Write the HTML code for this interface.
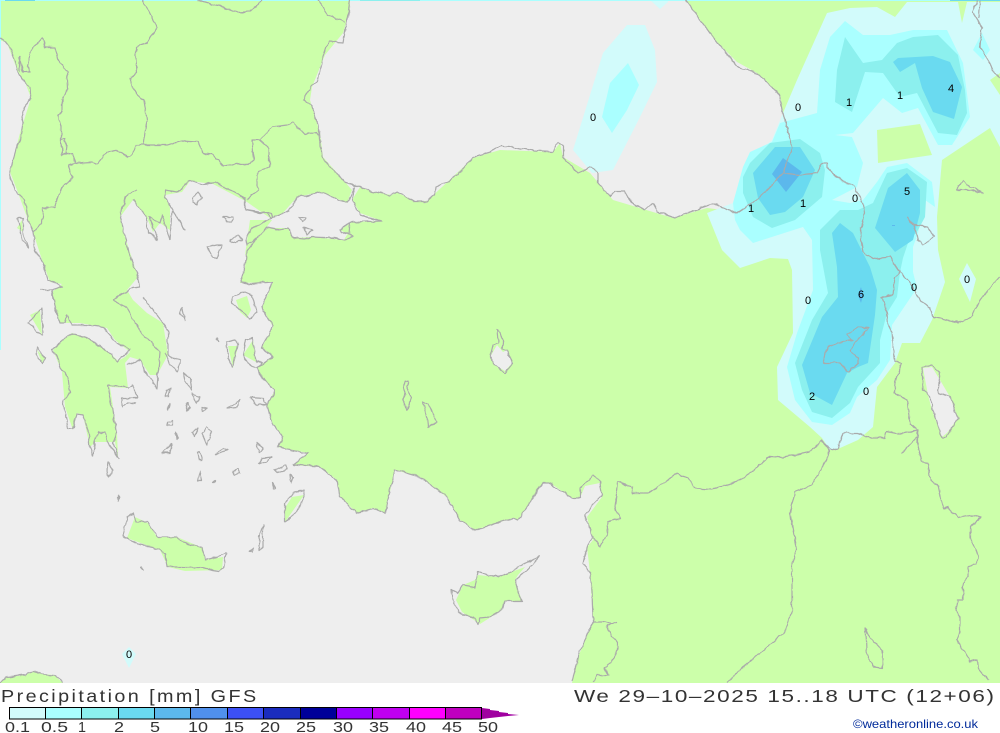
<!DOCTYPE html>
<html lang="en"><head><meta charset="utf-8"><title>Precipitation [mm] GFS</title>
<style>
html,body{margin:0;padding:0;background:#fff;width:1000px;height:733px;overflow:hidden}
svg{display:block;position:absolute;left:0;top:0}
text{font-family:"Liberation Sans",sans-serif}
</style></head><body>
<svg width="1000" height="733" viewBox="0 0 1000 733" xmlns="http://www.w3.org/2000/svg">
<defs>
<filter id="j" filterUnits="userSpaceOnUse" x="0" y="0" width="1000" height="683" color-interpolation-filters="sRGB">
<feTurbulence type="fractalNoise" baseFrequency="0.13" numOctaves="2" seed="4" result="n"/>
<feDisplacementMap in="SourceGraphic" in2="n" scale="4" xChannelSelector="R" yChannelSelector="G"/>
</filter>
</defs>
<rect width="1000" height="733" fill="#fff"/>
<rect width="1000" height="683" fill="#ccffaa"/>
<!-- sea -->
<g fill="#eeeeee">
<path d="M350,0 350,10 343,33 325,55 312,87 310,100 320,133 323,157 345,182 360,187 373,192 392,195 396,192 415,201 427,201 473,158 500,150 553,152 560,143 563,157 590,173 613,200 673,218 707,208 740,212 757,200 783,173 792,148 783,113 780,95 757,73 737,62 713,38 700,20 686,0Z"/>
<path d="M0,40 7,43 18,72 25,82 31,98 20,133 10,172 17,190 28,220 33,232 43,263 50,282 62,284 52,292 57,313 60,323 80,323 107,328 115,340 130,352 125,357 118,361 110,353 88,338 72,333 63,340 53,350 62,372 65,407 73,430 77,413 83,415 90,447 95,442 115,442 118,458 117,433 110,387 128,388 125,363 130,357 140,360 150,375 157,375 168,355 163,323 147,313 133,300 127,290 138,277 125,237 120,217 133,200 147,218 153,232 160,223 170,230 170,208 165,195 182,192 190,181 213,184 247,202 270,218 283,213 297,197 320,192 333,197 347,203 352,190 345,182 360,187 352,200 360,213 382,221 352,222 340,230 353,237 345,240 312,237 293,238 288,228 267,228 257,238 247,252 245,267 240,283 272,282 270,290 262,307 273,327 262,347 273,357 257,367 262,378 275,390 267,405 272,423 283,437 277,447 308,453 293,465 320,467 337,480 340,497 357,513 373,508 385,513 395,470 420,477 448,498 460,520 475,530 513,518 518,520 543,483 550,483 572,498 580,498 585,486 600,483 602,497 587,517 593,540 587,547 590,573 593,622 588,633 578,657 572,683 0,683Z"/>
</g>
<!-- green islands and land over the sea -->
<g fill="#ccffaa">
<path d="M135,517 148,523 157,537 177,537 203,548 205,560 223,557 222,570 185,571 168,567 160,550 127,538Z"/>
<path d="M304,495 285,522 285,508 292,497Z"/>
<path d="M478,575 497,577 525,567 518,575 515,580 522,601 505,601 502,610 480,624 462,612 456,600 463,585 475,580Z"/>
<path d="M236,300 247,296 251,310 247,318 240,312Z"/>
<path d="M228,346 238,346 233,368Z"/>
<path d="M250,220 272,220 253,245 245,255Z"/>
<path d="M342,243 350,230 353,237Z"/>
<path d="M37,350 45,358 42,363Z"/>
<path d="M30,315 40,310 42,335Z"/>
<path d="M243,355 253,340 256,362Z"/>
<path d="M22,220 17,228 23,232Z"/>
<path d="M0,683 7,677 25,675 34,671 42,674 54,675 63,683Z"/>
</g>
<path fill="#eeeeee" d="M497,345 503,352 507,350 512,363 505,371 495,365 490,357Z"/>
<path fill="#eeeeee" d="M923,368 932,367 940,380 950,397 958,418 947,433 942,437 932,410 928,395Z"/>
<!-- precipitation -->
<g fill="#d2fbfb">
<path d="M627,25 645,25 655,50 657,82 640,117 613,170 592,173 573,150 603,53Z"/>
<path d="M650,0 660,9 668,2 668,0Z"/>
<path fill-rule="evenodd" d="M827,13 850,8 877,7 895,17 907,2 958,2 962,23 967,2 1000,2 1000,73 990,80 1000,95 1000,147 990,128 942,160 937,217 938,250 945,282 932,320 920,343 902,343 895,363 877,387 873,427 858,440 840,448 830,450 822,438 810,427 778,400 777,367 793,333 792,270 788,259 770,258 740,268 722,250 707,213 733,203 743,167 772,140 783,113 797,80Z M877,130 920,124 932,155 878,163Z"/>
<path d="M967,263 976,279 970,302 959,279Z"/>
<path d="M129,647 136,654 129,668 122,654Z"/>
</g>
<g fill="#aaffff">
<path d="M628,63 639,85 627,110 612,133 602,117 610,83Z"/>
<path d="M973,50 982,33 990,50 983,60Z"/>
<path d="M820,70 830,37 845,21 863,35 890,35 913,30 947,30 963,63 970,117 952,145 938,145 918,108 902,113 883,98 853,133 835,135 852,137 863,163 857,187 832,200 850,203 863,200 877,182 887,167 907,163 932,182 935,207 925,200 918,233 913,247 913,272 917,288 892,325 890,360 877,380 857,397 850,413 832,425 812,422 795,400 787,367 797,333 813,290 812,240 803,227 753,243 740,230 735,220 733,203 743,167 750,152 772,142 780,123 817,113Z"/>
</g>
<g fill="#8cf0ee">
<path d="M845,37 863,63 882,60 897,43 913,37 938,35 958,55 965,90 967,113 957,135 938,133 917,93 900,97 883,73 865,72 852,112 835,102 837,70Z"/>
<path d="M743,177 750,163 770,143 800,139 820,153 825,170 822,197 795,220 772,228 753,217 743,193Z"/>
<path d="M820,230 840,210 858,210 873,203 887,173 907,168 927,182 925,217 918,230 908,243 903,258 900,272 897,297 887,313 880,340 880,363 858,387 850,403 832,418 812,412 802,390 795,363 812,320 828,293 820,250Z"/>
</g>
<g fill="#6adaf0">
<path d="M893,62 898,58 933,56 950,62 962,87 954,119 933,112 922,88 915,63 900,72Z"/>
<path d="M753,173 775,147 800,147 815,170 803,197 785,212 770,215 758,198Z"/>
<path d="M875,228 888,188 907,173 920,190 920,213 913,240 895,252Z"/>
<path d="M832,233 840,223 853,233 870,267 877,290 875,315 868,363 858,367 847,373 832,405 810,393 802,365 822,317 838,297 837,267Z"/>
</g>
<g fill="#5cb8ec">
<path d="M772,174 783,158 802,172 786,192Z"/>
<path d="M861,287 863,295 861,303 858,295Z"/>
<rect x="892" y="225" width="3" height="1"/>
</g>
<!-- edge artefacts -->
<rect x="0" y="0" width="1000" height="1" fill="#aaffff"/>
<rect x="0" y="0" width="1" height="350" fill="#aaffff"/>
<rect x="5" y="0" width="30" height="1" fill="#6adaf0"/>
<rect x="360" y="0" width="60" height="1" fill="#8cf0ee"/>
<rect x="950" y="0" width="50" height="1" fill="#6adaf0"/>
<!-- coast and border lines -->
<g filter="url(#j)">
<g fill="none" stroke="#aaaaaa" stroke-width="1.2" stroke-linejoin="round">
<polyline points="0,683 7,677 25,675 34,671 42,674 54,675 63,682"/>
<polyline points="0,38 7,42 15,60 18,72 23,80 30,88 31,98 25,107 22,117 23,123 20,140 17,146 13,160 10,173 15,190 25,200 28,220 33,232 35,250 43,263 48,280 62,287 52,290 40,290"/>
<polyline points="33,232 42,223 43,208 55,207 62,187 73,178 68,165 76,163 73,153 62,155 61,140 61,127 58,115 62,112 62,100 68,88 67,72 59,62 55,47 45,47 42,37 30,52 27,66 31,72 23,72 20,56 20,72"/>
<polygon points="61,140 65,138 67,145 66,155 62,155"/>
<polyline points="76,163 92,162 97,164 107,152 118,150 128,157 133,155 136,145 153,145 167,145 182,141 198,142 203,153 213,155 223,166 240,163 248,165 254,160 252,140 260,140 269,148 269,167 258,172 258,190 247,200"/>
<polyline points="143,0 157,28 147,43 136,47 136,60 137,73 130,78 133,90 144,100 147,120 143,145"/>
<polyline points="197,0 207,3 220,6 238,13 250,12 262,0"/>
<polyline points="318,0 322,5 328,15 345,22"/>
<polyline points="350,0 347,20 343,43 328,42 322,60 318,80 310,88 303,100 312,107 320,133 322,157 333,170 345,182"/>
<polyline points="260,140 272,127 287,125 293,122 305,135 317,132 320,136"/>
<polyline points="137,190 125,197 120,217 125,237 130,257 138,277 140,287 132,288 113,300 127,308 135,322 143,335 160,352 158,375 157,388 147,375 140,360 127,365"/>
<polyline points="143,297 163,323 168,330 168,355 180,360 178,372 170,365 165,353"/>
<polyline points="52,290 55,308 60,323 65,323 67,315 72,325 87,325 103,327 117,342 130,350 117,361 110,353 88,338 72,333 63,340 52,350 58,360 60,368 68,378 70,392 63,400 65,413 68,428 73,428 77,414 83,415 88,430 90,447 93,457 95,442 98,432 105,432 107,442 115,453 119,459 113,443 117,433 113,413 108,385 128,388 133,385 137,398 122,398 122,407 127,402 137,403"/>
<polyline points="133,200 147,218 148,233 158,240 150,217 160,223 162,215 170,240 172,210 185,230 175,215 165,197 165,190 177,192 190,180 203,185 215,182 245,198 245,210 267,213 272,218 290,210 297,197 310,195 320,192 333,197 338,200 348,202 352,193 355,187 352,200 360,215 382,221 352,222 340,230 353,237 345,240 335,238 312,237 305,239 293,238 288,228 275,230 267,228 257,238 247,252 245,267 240,283 252,284 272,282 270,288 262,307 273,327 262,347 273,357 257,367 262,378 275,390 267,405 272,423 283,437 277,447 290,450 308,453 293,465 320,467 337,480 340,497 350,507"/>
<polyline points="240,195 245,200 245,210 260,213 272,213 273,217 265,222 250,230 246,240 247,245 257,238"/>
<polyline points="345,182 360,187 370,191 390,195 397,192 413,201 427,201 434,195 435,187 447,182 462,170 473,157 490,152 502,146 533,151 553,152 558,143 563,145 563,157 578,173 592,167 598,173 598,183 610,197 615,191 625,191 632,203 645,210 653,203 658,212 675,218 688,212 712,204 737,213 757,200 783,173 792,148 783,113 780,95 757,73 738,67 723,50 700,20 686,0"/>
<polyline points="783,173 800,175 817,173 822,163 828,163 828,168 843,182 853,185 863,203 865,213 860,233 863,252 873,259 890,257 900,272 895,277 893,295 882,297 887,313 888,325 892,333 895,362 902,363 895,383 894,393 907,400 910,423 918,430 917,437 902,453"/>
<polyline points="917,430 905,433 897,433 887,431 885,438 873,438 857,433 842,433 838,448 830,450 822,440 810,452 783,457 770,456 752,472 735,483 712,489 695,488 688,478 677,474 660,485 648,493 633,493 632,487 618,482 615,507 620,518 608,522 607,533 600,547 593,538"/>
<polyline points="822,440 828,450 829,455 812,485 795,492 790,513 795,540 797,550 792,563 792,590 792,610 786,630 760,653 727,682"/>
<polyline points="900,272 910,282 920,300 930,308 933,317 958,323 972,317 980,300 990,288 1000,277"/>
<polyline points="917,430 917,443 922,462 928,463 930,480 938,485 943,508 948,507 958,518 973,515 982,517 970,527 970,538 978,555 977,563 968,567 968,577 963,583 963,600 957,600 955,610 960,617 960,630 957,640 970,662 977,660 978,668 988,680"/>
<polyline points="977,0 973,13 982,27 980,47 990,63 993,72 1000,78"/>
<polyline points="980,0 979,18"/>
<polyline points="350,507 357,513 373,508 385,513 395,470 420,477 448,498 460,520 475,530 513,518 518,520 543,483 550,483 572,498 580,498 580,488 593,475 600,483 602,495 592,505 585,515 593,537 587,547 583,563 590,573 592,590 593,622 588,633 578,657 572,682"/>
<polyline points="593,622 607,622 612,624 617,622 608,625 608,630 617,643 617,650 613,660 605,668 608,675 597,675 593,682"/>
<!-- lakes -->
<polygon points="908,217 912,224 927,227 935,237 923,245 918,240 913,223"/>
<polygon points="957,190 963,180 970,187 983,193 967,190"/>
<polygon points="847,335 858,327 868,328 855,342 850,352 858,357 858,363 848,372 840,363 823,363 827,347 837,343 852,340"/>
<polygon points="922,367 932,365 940,373 938,393 950,397 958,418 947,437 942,437 933,410 930,397 923,390"/>
<polygon points="865,628 870,637 882,650 883,668 873,667 867,655"/>
<polygon points="497,330 500,332 503,342 502,350 507,350 512,363 505,373 495,365 490,357 493,345 498,342"/>
<polygon points="405,382 409,381 407,388 410,395 411,400 407,410 403,400 405,392 403,388"/>
<polygon points="423,403 428,403 437,422 428,427 427,417"/>
<!-- islands -->
<polygon points="127,517 133,513 135,522 148,522 157,537 177,537 183,543 203,548 205,560 217,557 227,553 223,568 218,571 200,567 167,567 165,553 153,547 140,545 123,537"/>
<polygon points="303,490 293,493 285,503 285,522 297,512 304,497"/>
<polygon points="452,590 458,593 463,585 475,587 478,572 497,577 508,573 523,565 540,556 527,570 515,580 522,601 505,601 502,610 490,617 480,618 478,625 475,618 458,613 453,600"/>
<polygon points="232,297 245,292 252,295 257,313 250,318 240,310 232,303"/>
<polygon points="227,342 235,340 238,345 233,368 228,358"/>
<polygon points="246,340 252,338 256,362 262,362 256,368 247,362 243,355"/>
<polygon points="250,397 263,398 267,405 258,405"/>
<polygon points="227,408 240,400 237,407"/>
<polygon points="230,240 238,235 242,240 232,242"/>
<polygon points="193,197 198,192 202,197 197,204 193,202"/>
<polygon points="223,217 232,217 232,222 227,222"/>
<polygon points="207,247 217,245 222,245 217,258 212,257"/>
<polygon points="298,217 305,218 302,222"/>
<polygon points="303,227 313,230 308,235"/>
<polygon points="340,230 350,223 349,235"/>
<polygon points="182,307 185,320 180,313"/>
<polygon points="183,373 190,378 192,390 185,380"/>
<polygon points="192,393 200,398 197,403"/>
<polygon points="167,390 170,388 168,397 165,397"/>
<polygon points="170,403 168,411 168,407"/>
<polygon points="188,403 190,408 186,411"/>
<polygon points="202,407 207,408 203,412"/>
<polygon points="207,427 212,432 207,445 202,433"/>
<polygon points="192,433 198,428 195,437"/>
<polygon points="168,422 172,420 172,425 168,425"/>
<polygon points="176,432 178,437 177,439"/>
<polygon points="162,453 167,448 172,444 170,453"/>
<polygon points="197,453 200,452 202,460 198,460"/>
<polygon points="215,455 223,448 227,450"/>
<polygon points="233,472 238,468 240,472 235,475"/>
<polygon points="200,472 202,480 198,480"/>
<polygon points="212,482 215,480 215,482"/>
<polygon points="257,443 263,448 259,453"/>
<polygon points="258,465 263,458 273,457 265,462"/>
<polygon points="275,470 285,465 287,470 278,473"/>
<polygon points="290,475 293,477 291,483"/>
<polygon points="272,483 275,488 273,489"/>
<polygon points="263,525 263,547 259,550 259,537"/>
<polygon points="249,552 254,548 252,552"/>
<polygon points="108,462 113,470 108,477 107,470"/>
<polygon points="142,567 143,570 141,568"/>
<polygon points="37,347 45,358 42,363 36,353"/>
<polygon points="28,323 37,313 42,308 43,335 37,332"/>
<polygon points="17,218 23,218 23,233 28,247 22,240"/>
<polygon points="118,495 119,500 117,498"/>
<polygon points="217,338 218,342 216,340"/>
</g>
</g>
<!-- contour labels -->
<g font-size="11" fill="#000" text-anchor="middle">
<text x="593" y="121">0</text><text x="798" y="111">0</text><text x="849" y="106">1</text><text x="900" y="99">1</text><text x="951" y="92">4</text><text x="751" y="212">1</text><text x="803" y="207">1</text><text x="855" y="202">0</text><text x="907" y="195">5</text><text x="967" y="283">0</text><text x="914" y="291">0</text><text x="861" y="298">6</text><text x="808" y="304">0</text><text x="812" y="400">2</text><text x="866" y="395">0</text><text x="129" y="658">0</text>
</g>
<!-- title row -->
<g font-size="18" fill="#333">
<text transform="translate(1,702) scale(1.1,1)" textLength="232" lengthAdjust="spacing">Precipitation [mm] GFS</text>
<text transform="translate(574,702) scale(1.25,1)" textLength="336" lengthAdjust="spacing">We 29–10–2025 15..18 UTC (12+06)</text>
</g>
<!-- legend bar -->
<g stroke="#000" stroke-width="1" shape-rendering="crispEdges">
<rect x="9.5" y="707.5" width="36" height="11.5" fill="#d2fbfb"/>
<rect x="45.5" y="707.5" width="36" height="11.5" fill="#aaffff"/>
<rect x="81.5" y="707.5" width="37" height="11.5" fill="#8cf0ee"/>
<rect x="118.5" y="707.5" width="36" height="11.5" fill="#6adaf0"/>
<rect x="154.5" y="707.5" width="36" height="11.5" fill="#5cb8ec"/>
<rect x="190.5" y="707.5" width="37" height="11.5" fill="#5090ec"/>
<rect x="227.5" y="707.5" width="36" height="11.5" fill="#3c50f5"/>
<rect x="263.5" y="707.5" width="37" height="11.5" fill="#1a2cbe"/>
<rect x="300.5" y="707.5" width="36" height="11.5" fill="#000099"/>
<rect x="336.5" y="707.5" width="36" height="11.5" fill="#9900ff"/>
<rect x="372.5" y="707.5" width="37" height="11.5" fill="#c000f0"/>
<rect x="409.5" y="707.5" width="36" height="11.5" fill="#ff00ff"/>
<rect x="445.5" y="707.5" width="36" height="11.5" fill="#c000c0"/>
</g>
<polygon points="482,708 490,709 490,710 499,711 499,712 508,713 508,714 519,715 508,716 499,717 490,718 482,719" fill="#a000a0"/>
<g font-size="15" fill="#333">
<text x="5" y="732" textLength="25" lengthAdjust="spacingAndGlyphs">0.1</text><text x="41" y="732" textLength="27" lengthAdjust="spacingAndGlyphs">0.5</text><text x="78" y="732" textLength="8" lengthAdjust="spacingAndGlyphs">1</text><text x="114" y="732" textLength="10" lengthAdjust="spacingAndGlyphs">2</text><text x="150" y="732" textLength="10" lengthAdjust="spacingAndGlyphs">5</text><text x="188" y="732" textLength="20" lengthAdjust="spacingAndGlyphs">10</text><text x="224" y="732" textLength="20" lengthAdjust="spacingAndGlyphs">15</text><text x="260" y="732" textLength="20" lengthAdjust="spacingAndGlyphs">20</text><text x="296" y="732" textLength="20" lengthAdjust="spacingAndGlyphs">25</text><text x="333" y="732" textLength="20" lengthAdjust="spacingAndGlyphs">30</text><text x="369" y="732" textLength="20" lengthAdjust="spacingAndGlyphs">35</text><text x="406" y="732" textLength="20" lengthAdjust="spacingAndGlyphs">40</text><text x="442" y="732" textLength="20" lengthAdjust="spacingAndGlyphs">45</text><text x="478" y="732" textLength="20" lengthAdjust="spacingAndGlyphs">50</text>
</g>
<text x="853" y="728" font-size="12" fill="#002a9a" textLength="125" lengthAdjust="spacingAndGlyphs">©weatheronline.co.uk</text>
</svg>
</body></html>
